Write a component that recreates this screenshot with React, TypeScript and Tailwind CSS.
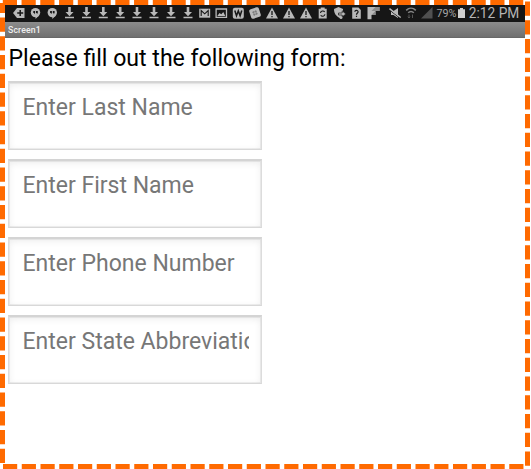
import React from "react";

const G = "#b9b9b9";
const K = "#161616";

function Ic({ x, children }: { x: number; children: React.ReactNode }) {
  return <g transform={`translate(${x} 13)`}>{children}</g>;
}

function StatusIcons() {
  const downs = [69.5, 86.5, 103.3, 120.2, 137, 154, 171, 188];
  const warns = [272, 289, 306];
  return (
    <svg className="block h-[17px] w-[520px]" viewBox="5 5 520 17" fill={G}>
      <Ic x={19}>
        <path d="M-6 0L-2-5H5.5V5H-2Z" />
        <path d="M1.2-3V3M-1.8 0H4.2" stroke={K} strokeWidth="1.5" />
      </Ic>
      {[35.5, 52.3].map((x) => (
        <Ic key={x} x={x}>
          <circle cx="0" cy="-.4" r="4.7" />
          <path d="M0 3.5V6L3.5 2.5Z" />
          <path d="M-2.2-2H-.4V0L-1.4 1.2V0H-2.2ZM.5-2H2.3V0L1.3 1.2V0H.5Z" fill={K} />
        </Ic>
      ))}
      {downs.map((x) => (
        <Ic key={x} x={x}>
          <path d="M-1.3-6H1.3V-1H4L0 3.2L-4-1H-1.3ZM-4.5 3.7H4.5V5.3H-4.5Z" />
        </Ic>
      ))}
      <Ic x={204.7}>
        <path d="M-5.5-4.3H5.5V4.7H-5.5Z" />
        <path d="M-3.5 3V-2.5L0 .8L3.5-2.5V3" fill="none" stroke={K} strokeWidth="1.1" />
      </Ic>
      <Ic x={221.3}>
        <path d="M-5.2-4H5.2V4.3H-5.2Z" fill="none" stroke={G} strokeWidth="1.3" />
        <path d="M-4 3L-1.8 0L0 1.3L2-1L4 3Z" />
      </Ic>
      <Ic x={238.3}>
        <rect x="-5.5" y="-5.3" width="11" height="11" rx="2" />
        <path d="M-3.5-2.5L-1.8 2.8L0-2L1.8 2.8L3.5-2.5" fill="none" stroke={K} strokeWidth="1.5" />
      </Ic>
      <Ic x={255}>
        <g transform="rotate(-18)">
          <rect x="-5" y="-5" width="10" height="10" rx="2" />
          <path d="M-2.4-1.2H2.4M-2.4 1.2H2.4M-1.2-2.4V2.4M1.2-2.4V2.4" stroke="#777" strokeWidth=".8" />
        </g>
      </Ic>
      {warns.map((x) => (
        <Ic key={x} x={x}>
          <path d="M0-5.5L6 5.5H-6Z" />
          <path d="M0-2V2M0 3V4.2" stroke={K} strokeWidth="1.3" />
        </Ic>
      ))}
      <Ic x={322.7}>
        <path d="M-2-5.5H2V-4.3H4V5.5H-4V-4.3H-2Z" />
        <path d="M-2.2 0A2.3 2.3 0 0 1 2-1M2.2 1.2A2.3 2.3 0 0 1-2 2.2" fill="none" stroke={K} strokeWidth="1.1" />
      </Ic>
      <Ic x={339.5}>
        <path d="M-5.5-4L-1-6L3.5-4V0C3 3 1 4 0 5C-3 3-5.5 1-5.5-4Z" />
        <path d="M-1 0H2.7V-2.2L6.3 1L2.7 4V2H-1Z" stroke={K} strokeWidth=".7" />
        <circle cx="1.5" cy="4.5" r="1.5" />
      </Ic>
      <Ic x={356.5}>
        <path d="M-4.3-5.5H2L4.3-3V5.7H-4.3Z" />
        <path d="M-1.7-1.3C-1.5-3 1.7-3 1.6-1C1.4 0 0 .2 0 1.7M0 2.8V4" fill="none" stroke={K} strokeWidth="1.2" />
      </Ic>
      <Ic x={373.5}>
        <path d="M-6-6H6V-2H2V2H-2V6.3H-6Z" />
        <path d="M-2-2H6V-6H2ZM-2 2H2V-2Z" fill="#8b8b8b" />
      </Ic>
      <Ic x={395}>
        <path d="M-4-2H-1.5L3-5V5L-1.5 2H-4Z" />
        <path d="M-5.5-3L5.5 5.5" stroke={K} strokeWidth="1" />
        <path d="M-5.5-4.3L5.7 4.5" stroke={G} strokeWidth="1.5" />
      </Ic>
      <Ic x={411}>
        <path d="M-4.8-2.7C-2-5.4 2-5.4 4.8-2.7M-2.8-.2C-1-2 1-2 2.8-.2" fill="none" stroke="#858585" strokeWidth="1.6" />
        <path d="M-2 1.5V5M-3.2 3.7L-2 5L-.8 3.7M1.5 5V1.5" fill="none" stroke="#555" strokeWidth="1" />
      </Ic>
      <path d="M421 18.5H432.5V7Z" fill="#505050" />
      <path d="M458 9.3H460V8H463V9.3H465V18H458Z" fill="#d0d0d0" />
      <text x="436.5" y="17.2" textLength="20" lengthAdjust="spacingAndGlyphs" fontFamily="Roboto, sans-serif" fontSize="11" fill="#a6a6a6">79%</text>
      <text x="468.8" y="17.8" textLength="50.5" lengthAdjust="spacingAndGlyphs" fontFamily="Roboto, sans-serif" fontSize="14.3" fill="#b5b5b5">2:12 PM</text>
    </svg>
  );
}

function Field({ label }: { label: string }) {
  return (
    <div className="h-[69px] w-[254px] border border-t-2 border-t-[#d4d4d4] border-x-[#dcdcdc] border-b-[#d8d8d8] bg-white pl-[13.5px] pr-3 pt-[9px] shadow-[inset_0_2px_7px_#00000014,inset_0_0_0_1px_#f0f0f0]">
      <div className="overflow-hidden whitespace-nowrap text-[23px] leading-[32px] text-[#777]">{label}</div>
    </div>
  );
}

export default function App() {
  return (
    <div className="relative h-[469px] w-[531px] overflow-hidden bg-white p-[5px] font-[Roboto,sans-serif]">
      <div className="w-[520px]">
        <div className="h-[17px] bg-[#161616]"><StatusIcons /></div>
        <div className="h-4 border-b border-[#686868] bg-linear-to-b from-[#8c8c8c] to-[#707070] pl-[3px] text-[8.7px] leading-[16px] font-medium tracking-[0.15px] text-[#eee]">Screen1</div>
        <h1 className="h-[43px] whitespace-nowrap pl-[3.5px] text-[23.1px] leading-[42px] text-black">Please fill out the following form:</h1>
        <div className="flex flex-col gap-[9px] pl-[3px]">
          <Field label="Enter Last Name" />
          <Field label="Enter First Name" />
          <Field label="Enter Phone Number" />
          <Field label="Enter State Abbreviation" />
        </div>
      </div>
      <svg className="pointer-events-none absolute inset-0 h-[469px] w-[531px]" viewBox="0 0 531 469" fill="none" stroke="#ff6a00" strokeWidth="5">
        <path d="M2.8 2.5H525" strokeDasharray="14.2 4.55" />
        <path d="M2.5 463V3" strokeDasharray="14.2 4.55" />
        <path d="M3 466.5H525" strokeDasharray="14.2 4.55" />
        <path d="M527.5 1.5V466.5" strokeDasharray="14.2 4.55" />
      </svg>
    </div>
  );
}
